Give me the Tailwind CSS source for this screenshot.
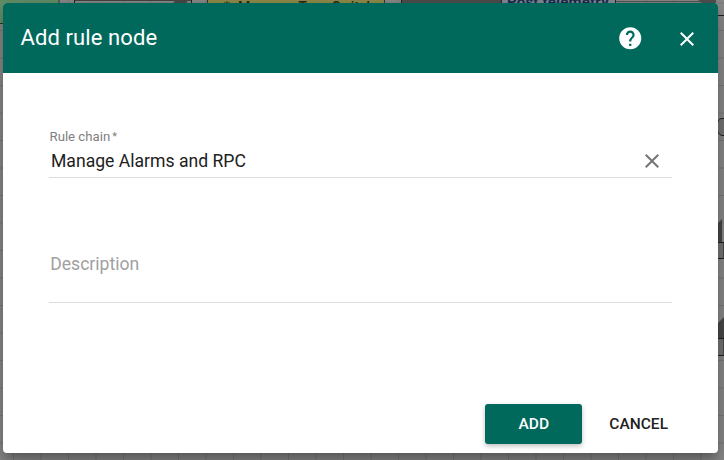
<!DOCTYPE html>
<html lang="en">
<head>
<meta charset="utf-8">
<title>Add rule node</title>
<script src="https://cdn.jsdelivr.net/npm/@tailwindcss/browser@4"></script>
</head>
<body class="relative w-[724px] h-[460px] overflow-hidden bg-[#8a8a8a] font-[Roboto,sans-serif]">
<!-- dimmed rule chain canvas -->
<svg class="absolute inset-0" width="724" height="460" aria-hidden="true">
  <defs><pattern id="grid" x="13" y="2.500" width="27.5" height="27.5" patternUnits="userSpaceOnUse"><path d="M0 .5H27.5M.5 0V27.5" stroke="#7a7a7a" fill="none"/></pattern></defs>
  <rect width="724" height="460" fill="url(#grid)"/>
  <rect x="-5" y="-20" width="64" height="43.5" fill="#629068" stroke="#333"/>
  <path d="M74.500 0V5M191.500 0V5M401.500 0V5" stroke="#222"/>
  <path d="M75 .5H191" stroke="#444"/>
  <path d="M176 0h12l-2 4h-14z" fill="#484848"/>
  <rect x="207.500" y="-20" width="177" height="40" fill="#908b4a" stroke="#333"/>
  <path d="M402 0H502V5H402z" fill="#4d4d4d"/>
  <rect x="501.500" y="-20" width="114" height="40" fill="#858a92" stroke="#152c50"/>
  <path d="M616 1.500H706" stroke="#555"/><path d="M698 0H716V14z" fill="#505050"/>
  <path d="M716 15.500H724" stroke="#222"/>
  <path d="M724 118.500h-2q-5 0-5 8t5 9h2" fill="#757575" stroke="#222"/>
  <path d="M718 223L722 219V242H718zM718 323L724 317V338H718z" fill="#484848"/>
  <path d="M716 242.500H724V258.500H716zM716 338.500H724V355.500H716z" fill="#757575" stroke="#222"/>
</svg>
<span class="absolute left-[507px] top-[-6px] text-[15px] leading-4 font-bold text-[#152c50] whitespace-nowrap tracking-[0.2px]">Post telemetry</span>
<span class="absolute left-[221px] top-[-1px] text-[13px] leading-4 text-[#282818] whitespace-nowrap">⚙</span>
<span class="absolute left-[238px] top-[-1px] text-[14px] leading-4 font-medium text-[#282818] whitespace-nowrap">Message Type Switch</span>

<main class="absolute left-[3px] top-[3px] w-[715px] h-[450px] rounded-[4px] bg-white overflow-hidden shadow-[0_7px_8px_-4px_rgba(0,0,0,.2),0_13px_19px_2px_rgba(0,0,0,.14),0_5px_24px_4px_rgba(0,0,0,.12)] flex flex-col">
  <header class="h-[70px] shrink-0 bg-[#00695c] text-white flex items-center pl-[17.500px] pr-[19px]">
    <h1 class="flex-1 text-[22px] leading-7 tracking-[0.1px]">Add rule node</h1>
    <svg class="mr-[31.500px]" width="26.500" height="26.500" viewBox="0 0 24 24" fill="currentColor"><path d="M12 2C6.480 2 2 6.480 2 12s4.480 10 10 10 10-4.480 10-10S17.520 2 12 2zm1 17h-2v-2h2v2zm2.070-7.750l-.9.920C13.450 12.900 13 13.500 13 15h-2v-.5c0-1.100.45-2.100 1.170-2.830l1.240-1.260c.37-.36.590-.86.590-1.410 0-1.100-.9-2-2-2s-2 .9-2 2H8c0-2.210 1.790-4 4-4s4 1.790 4 4c0 .88-.36 1.680-.93 2.250z"/></svg>
    <svg class="mt-[2px]" width="24" height="24" viewBox="0 0 24 24" fill="currentColor"><path d="M19 6.410L17.590 5 12 10.590 6.410 5 5 6.410 10.590 12 5 17.590 6.410 19 12 13.410 17.590 19 19 17.590 13.410 12z"/></svg>
  </header>
  <form class="flex-1 px-[46px] pt-[55px]">
    <div class="h-[50px] border-b border-[#dedede]">
      <label class="block pl-[0.500px] text-[13.200px] leading-[17px] text-[#808080]">Rule chain<span class="text-[11px] relative -top-px"><span class="inline-block w-[2px]"></span>*</span></label>
      <div class="flex items-center justify-between h-[30px] pl-[2px] pr-[8px] text-[17.600px] text-[#212121]">
        <span>Manage Alarms and RPC</span>
        <svg width="24" height="24" viewBox="0 0 24 24" fill="#757575"><path d="M19 6.410L17.590 5 12 10.590 6.410 5 5 6.410 10.590 12 5 17.590 6.410 19 12 13.410 17.590 19 19 17.590 13.410 12z"/></svg>
      </div>
    </div>
    <div class="h-[125px] pt-[74px] pl-[1.200px] border-b border-[#dedede] text-[17.600px] leading-6 text-[#a0a0a0]">Description</div>
  </form>
  <footer class="h-[49px] shrink-0 flex justify-end items-start pr-[50px] gap-[27px] text-[15.500px] leading-10 font-medium">
    <button type="button" class="w-[97px] h-10 rounded-[3px] bg-[#00695c] text-white shadow-[0_2px_5px_rgba(0,0,0,.26)]">ADD</button>
    <button type="button" class="h-10 text-[#212121]">CANCEL</button>
  </footer>
</main>
</body>
</html>
